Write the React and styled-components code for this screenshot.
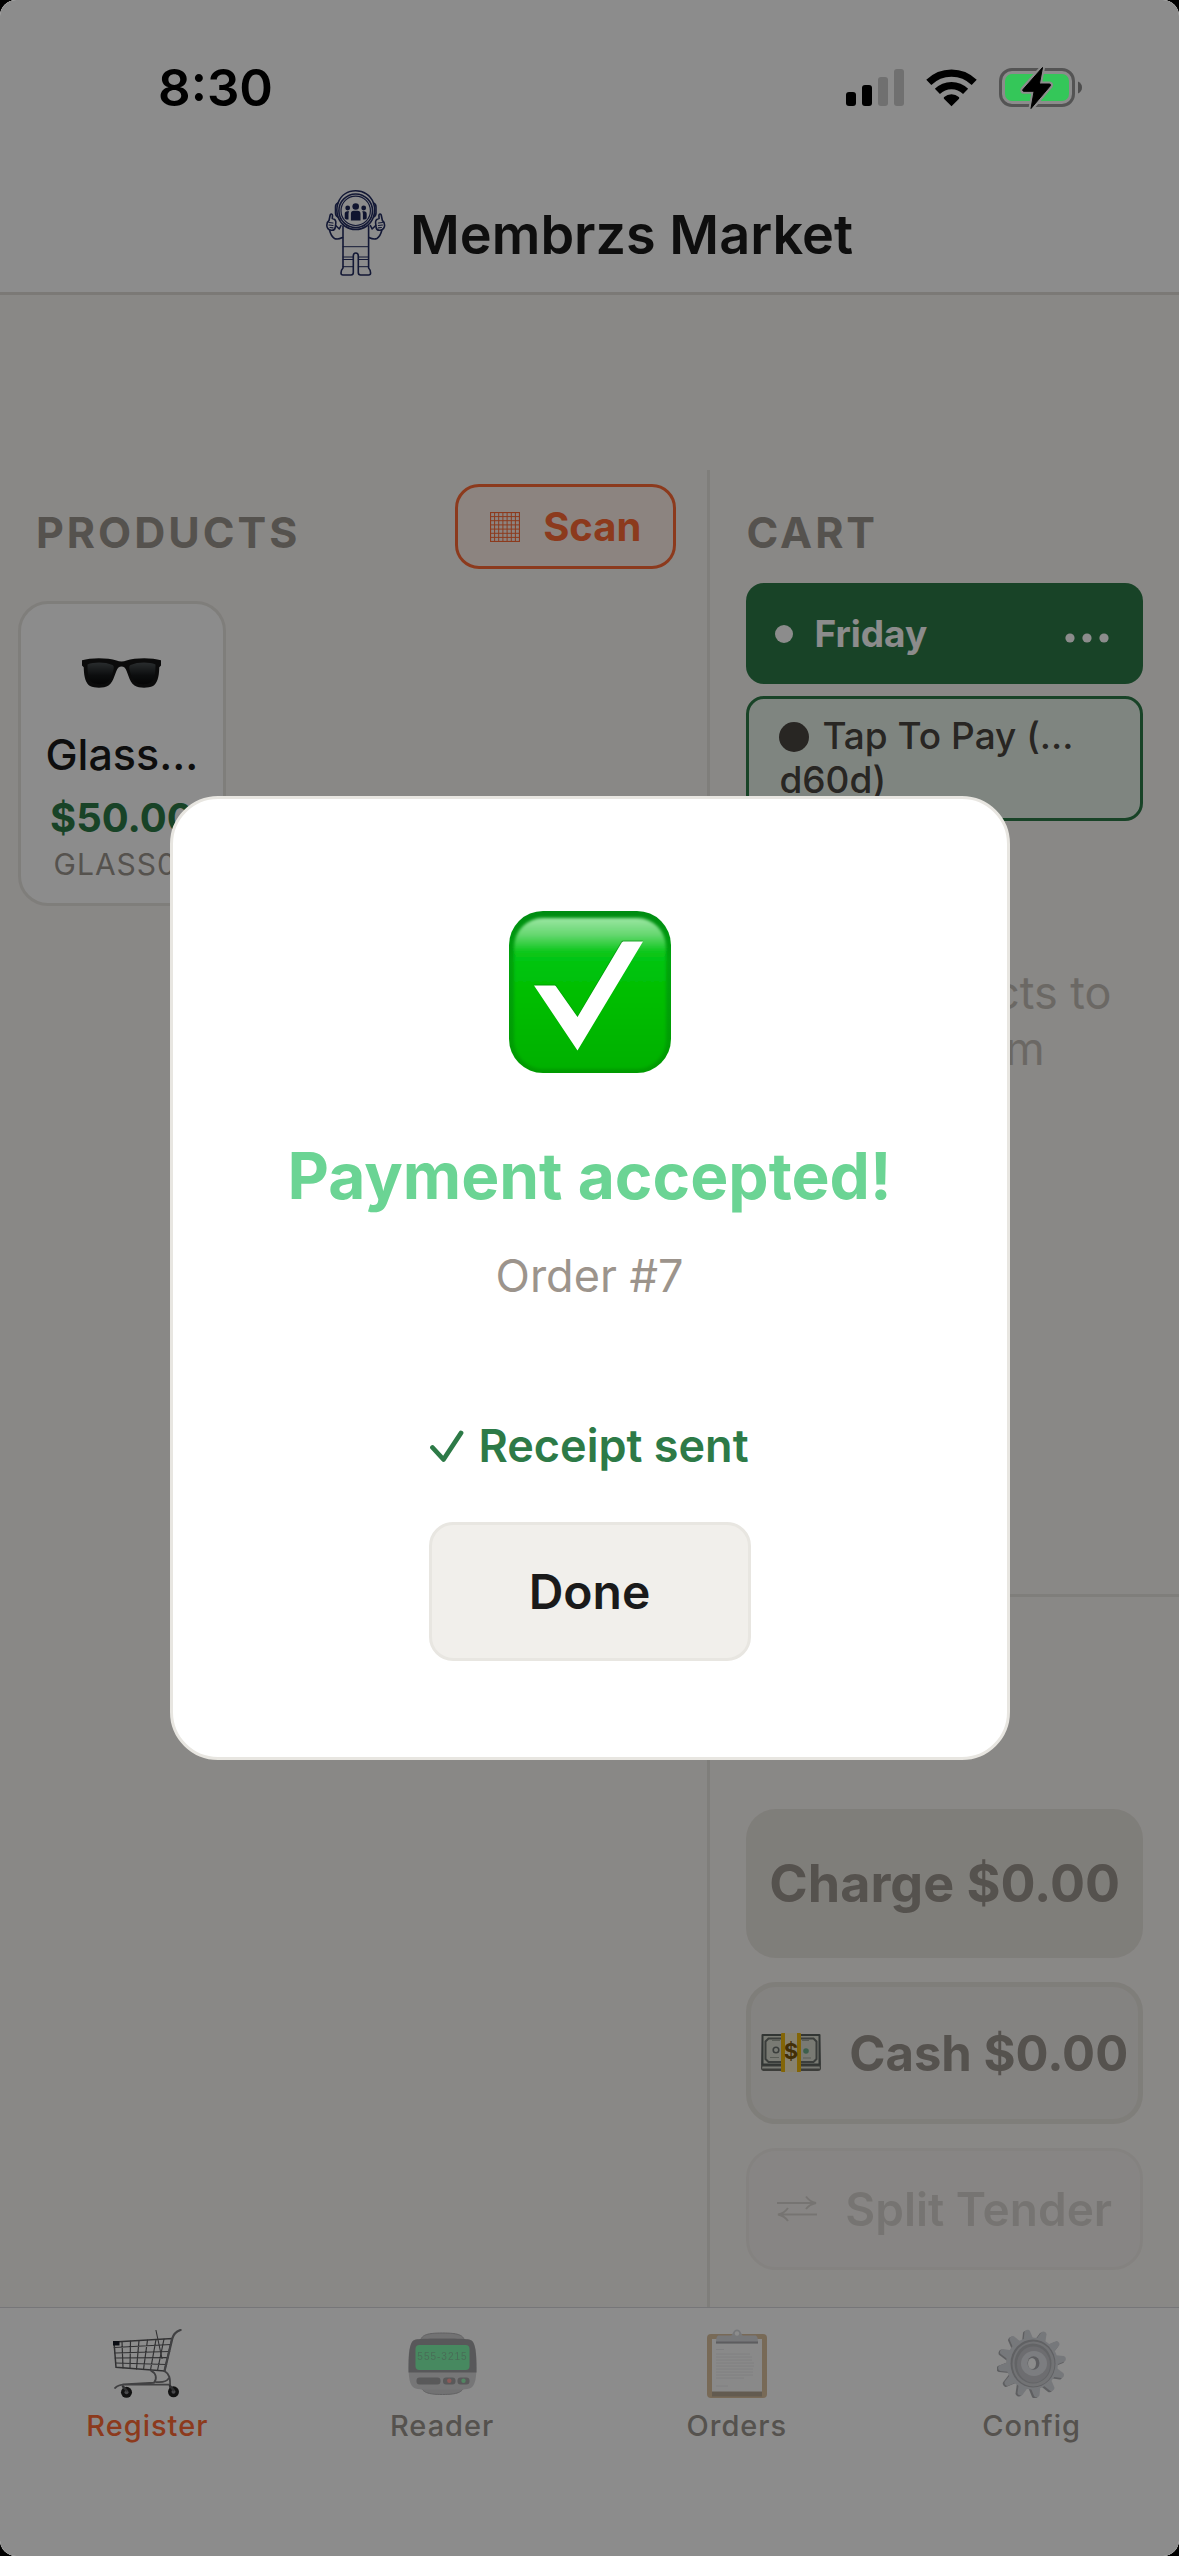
import React, { useState } from "react";
import styled, { createGlobalStyle } from "styled-components";

const GlobalStyle = createGlobalStyle`
  * {
    box-sizing: border-box;
  }
  body {
    margin: 0;
    background: #000;
    font-family: Inter, "Liberation Sans", sans-serif;
  }
  button {
    font-family: inherit;
    margin: 0;
  }
`;

const Screen = styled.div`
  position: relative;
  display: flex;
  flex-direction: column;
  min-height: 100vh;
  overflow: hidden;
  border-radius: 16px;
  background: #faf7f4;
`;

const Header = styled.header`
  background: #fff;
  border-bottom: 3px solid #e0ddd8;
`;

const StatusBar = styled.div`
  position: relative;
  z-index: 2;
  display: flex;
  justify-content: space-between;
  align-items: center;
  height: 122px;
  padding: 54px 97px 0 158px;
`;

const Clock = styled.span`
  font-size: 51px;
  line-height: 68px;
  font-weight: 600;
  color: #000;
`;

const StatusIcons = styled.div`
  display: flex;
  align-items: center;
  gap: 22px;

  svg {
    display: block;
  }
`;

const Brand = styled.div`
  display: flex;
  justify-content: center;
  align-items: flex-end;
  gap: 24px;
  padding: 68px 36px 16px;
`;

const BrandName = styled.h1`
  margin: 0;
  font-size: 54px;
  line-height: 82px;
  font-weight: 600;
  color: #1a1a1a;
`;

const Main = styled.main`
  flex: 1;
  display: grid;
  grid-template-columns: 3fr 2fr;
  padding-top: 175px;
`;

const Products = styled.section`
  min-width: 0;
  padding: 14px 18px 0;
`;

const SectionHead = styled.div`
  display: flex;
  justify-content: space-between;
  align-items: flex-start;
  padding: 0 13px 32px 18px;
`;

const SectionTitle = styled.h2`
  margin: 22px 0 0;
  font-size: 43px;
  line-height: 53px;
  font-weight: 700;
  letter-spacing: 3px;
  color: #9c958e;
`;

const ScanButton = styled.button`
  display: flex;
  align-items: center;
  gap: 23px;
  height: 85px;
  padding: 0 32px;
  border: 3px solid #ff6b35;
  border-radius: 24px;
  background: #fff0ea;
  color: #ff6b35;
  font-size: 40px;
  font-weight: 700;
`;

const ProductGrid = styled.div`
  display: grid;
  grid-template-columns: repeat(3, 1fr);
  gap: 24px;
`;

const ProductCard = styled.button`
  display: flex;
  flex-direction: column;
  align-items: center;
  padding: 29px 12px 21px;
  border: 3px solid #e8e5e0;
  border-radius: 30px;
  background: #fff;
`;

const ProductPicture = styled.span`
  display: flex;
  align-items: center;
  height: 80px;
`;

const ProductName = styled.span`
  margin-top: 15px;
  font-size: 43px;
  line-height: 52px;
  font-weight: 500;
  color: #1a1a1a;
`;

const ProductPrice = styled.span`
  margin-top: 14px;
  font-size: 40px;
  line-height: 48px;
  font-weight: 700;
  color: #2d7a47;
`;

const ProductSku = styled.span`
  margin-top: 4px;
  font-size: 30px;
  line-height: 36px;
  letter-spacing: 1px;
  color: #9c958e;
`;

const Cart = styled.section`
  display: flex;
  flex-direction: column;
  min-width: 0;
  border-left: 3px solid #e8e5e0;
`;

const CartBody = styled.div`
  flex: 1;
  padding: 14px 36px 0;
`;

const EventButton = styled.button`
  display: flex;
  align-items: center;
  width: 100%;
  height: 101px;
  margin-top: 24px;
  padding: 0 34px 0 29px;
  border: 0;
  border-radius: 18px;
  background: #2d7a47;
  color: #fff;
  font-size: 37px;
  font-weight: 700;
  text-align: left;
`;

const EventDot = styled.span`
  width: 18px;
  height: 18px;
  margin-right: 21px;
  border-radius: 50%;
  background: #fff;
`;

const EventName = styled.span`
  flex: 1;
`;

const ReaderButton = styled.button`
  display: block;
  width: 100%;
  margin-top: 12px;
  padding: 15px 30px 16px;
  border: 3px solid #2d7a47;
  border-radius: 18px;
  background: #e8f3ea;
  color: #4a4540;
  font-size: 37px;
  line-height: 44px;
  font-weight: 500;
  text-align: left;
`;

const ReaderDot = styled.span`
  display: inline-block;
  width: 30px;
  height: 30px;
  margin-right: 13px;
  border-radius: 50%;
  background: #4a4540;
  vertical-align: -3px;
`;

const EmptyCart = styled.p`
  margin: 144px 0 0;
  font-size: 45px;
  line-height: 56px;
  text-align: center;
  color: #c4beb7;
`;

const Checkout = styled.div`
  display: flex;
  flex-direction: column;
  gap: 24px;
  padding: 212px 36px 37px;
  border-top: 3px solid #e8e5e0;
`;

const PayButton = styled.button`
  display: flex;
  justify-content: center;
  align-items: center;
  gap: 28px;
  padding: 0;
  border-radius: 30px;
  color: #9c958e;
  font-weight: 600;
  white-space: nowrap;
`;

const ChargeButton = styled(PayButton)`
  height: 149px;
  border: 0;
  background: #e8e5de;
  font-size: 52px;
  font-weight: 700;
`;

const CashButton = styled(PayButton)`
  height: 142px;
  border: 5px solid #e8e5de;
  background: #f1eeeb;
  font-size: 49px;
  font-weight: 700;
`;

const SplitButton = styled(PayButton)`
  height: 122px;
  border: 3px solid #e0dcd6;
  background: #f1eeeb;
  font-size: 46px;
  opacity: 0.35;
`;

const TabBar = styled.nav`
  display: grid;
  grid-template-columns: repeat(4, 1fr);
  padding: 21px 0 112px;
  border-top: 1px solid #d8d8dc;
  background: #fff;
`;

const Tab = styled.a`
  display: flex;
  flex-direction: column;
  align-items: center;
  gap: 10px;
  font-size: 29px;
  line-height: 36px;
  font-weight: 500;
  letter-spacing: 1px;
  text-decoration: none;
  color: ${({ $active }) => ($active ? "#ff6b35" : "#9c958e")};

  svg {
    display: block;
    opacity: ${({ $active }) => ($active ? 1 : 0.5)};
  }
`;

const Backdrop = styled.div`
  position: absolute;
  inset: 0;
  z-index: 1;
  display: flex;
  justify-content: center;
  align-items: center;
  background: rgba(0, 0, 0, 0.45);
`;

const Modal = styled.div`
  display: flex;
  flex-direction: column;
  align-items: center;
  width: 840px;
  max-width: 90%;
  padding: 112px 48px 96px;
  border: 3px solid #e8e6e1;
  border-radius: 48px;
  background: #fff;
`;

const ModalTitle = styled.h2`
  margin: 63px 0 0;
  font-size: 64px;
  line-height: 80px;
  font-weight: 700;
  color: #6bd494;
`;

const OrderNumber = styled.p`
  margin: 32px 0 0;
  font-size: 45px;
  line-height: 56px;
  color: #9c948c;
`;

const Receipt = styled.p`
  display: flex;
  align-items: center;
  gap: 14px;
  margin: 114px 0 0;
  font-size: 45px;
  line-height: 56px;
  font-weight: 600;
  color: #2d7a47;
`;

const DoneButton = styled.button`
  width: 322px;
  height: 139px;
  margin-top: 48px;
  border: 3px solid #e8e6e1;
  border-radius: 24px;
  background: #f1efeb;
  color: #1a1a1a;
  font-size: 48px;
  font-weight: 600;
`;

const SignalIcon = () => (
  <svg width="58" height="38" viewBox="0 0 58 38">
    <rect x="0" y="23" width="10" height="14" rx="3" fill="#000" />
    <rect x="16" y="16" width="10" height="21" rx="3" fill="#000" />
    <rect x="32" y="8" width="10" height="29" rx="3" fill="#000" opacity="0.2" />
    <rect x="48" y="0" width="10" height="37" rx="3" fill="#000" opacity="0.2" />
  </svg>
);

const WifiIcon = () => (
  <svg width="51" height="38" viewBox="0 0 51 38">
    <g fill="none" stroke="#000" strokeWidth="7.2">
      <path d="M2.800 13.400a32.300 32.300 0 0 1 45.400 0" />
      <path d="M11.400 22.400a20 20 0 0 1 28.200 0" />
    </g>
    <path d="M25.500 37.200l-7.300-7.300c-.6-.6-.6-1.400 0-1.900a11 11 0 0 1 14.600 0c.6.5.6 1.300 0 1.900z" fill="#000" />
  </svg>
);

const BatteryIcon = () => (
  <svg width="83" height="42" viewBox="0 0 83 42">
    <rect x="1.5" y="2.5" width="73" height="36" rx="11.5" fill="none" stroke="#000" strokeOpacity="0.4" strokeWidth="3" />
    <path d="M79 14.5c2.600 1 4 3.400 4 6s-1.400 5-4 6z" fill="#000" opacity="0.45" />
    <rect x="6" y="7" width="64" height="27" rx="7" fill="#34c759" />
    <path
      d="M43.5 .5L24 22.500c-.6 1-.2 1.800.9 1.800h10.200L32 41.500 51.300 18.800c.6-1 .2-1.800-.9-1.800H40.400z"
      fill="#000"
      stroke="#8c8c8c"
      strokeWidth="5"
      strokeLinejoin="round"
    />
    <path
      d="M43.5 .5L24 22.500c-.6 1-.2 1.800.9 1.800h10.200L32 41.500 51.300 18.800c.6-1 .2-1.800-.9-1.800H40.400z"
      fill="#000"
      stroke="#000"
      strokeWidth="1"
      strokeLinejoin="round"
    />
  </svg>
);

const AstronautLogo = () => (
  <svg width="60" height="86" viewBox="0 0 60 86" fill="none" stroke="#232d62" strokeWidth="1.6" strokeLinejoin="round" strokeLinecap="round">
    <path d="M12 13C15 5 22 .8 29.700.8S44.500 5 47.500 13c2 .6 2.500 2 2.500 4v6c0 2-.8 3.300-2.500 4C44.500 35 37.500 39.500 29.700 39.500S15 35 12 27c-1.700-.7-2.500-2-2.500-4v-6c0-2 .5-3.400 2.500-4z" />
    <path d="M12 13c-1.500 4.500-1.500 9.500 0 14M47.500 13c1.500 4.500 1.500 9.500 0 14" />
    <circle cx="29.7" cy="20.8" r="16.8" />
    <circle cx="29.7" cy="20.8" r="14.7" strokeWidth="1.2" />
    <g fill="#1c2657" stroke="none">
      <circle cx="29.7" cy="16.5" r="3.3" />
      <circle cx="21.7" cy="18" r="2.4" />
      <circle cx="37.7" cy="18" r="2.4" />
      <path d="M24.900 30.500v-6.500c0-2 1-3.200 3-3.200h3.600c2 0 3 1.200 3 3.200v6.500z" />
      <path d="M18.700 28.500v-4.500c0-1.800 1-2.700 2.500-2.700h2c-.5.800-.7 1.700-.7 2.700v5.500h-2.300z" />
      <path d="M40.700 28.500v-4.500c0-1.800-1-2.700-2.500-2.700h-2c.5.800.7 1.700.7 2.700v5.500h2.300z" />
    </g>
    <path d="M3 30.500l1.200-5.500c.3-1.500 2.300-1.200 2.300.4l-.2 3.100c2.500.5 3.800 2 3.500 4.500l-.5 4.500c-.4 2-2 3-4 2.700-3-.5-4.500-2.300-4.500-5 0-2 .7-3.600 2.200-4.700z" />
    <path d="M3 32.500l4 .5M3 35l4 .5M4 37.500l3 .3" strokeWidth="1.2" />
    <path d="M56.400 30.500l-1.200-5.500c-.3-1.500-2.300-1.200-2.300.4l.2 3.100c-2.500.5-3.800 2-3.500 4.500l.5 4.500c.4 2 2 3 4 2.700 3-.5 4.500-2.300 4.500-5 0-2-.7-3.600-2.200-4.700z" />
    <path d="M56.400 32.500l-4 .5M56.400 35l-4 .5M55.400 37.500l-3 .3" strokeWidth="1.2" />
    <path d="M9.700 35.500l3.600 3.500 1.700-3.500M3.500 40c1 4 2.500 7 5 8.500 2 1 5 .5 8-1M49.700 35.500l-3.600 3.500-1.700-3.500M55.900 40c-1 4-2.500 7-5 8.500-2 1-5 .5-8-1" />
    <path d="M17 36v42c-1.500 1.500-2 3-2 5 0 1.300.8 2 2 2h8c1.400 0 2.300-1 2.300-2.500V66c0-2 .8-3 2.500-3s2.500 1 2.500 3v16.500c0 1.500 1 2.500 2.300 2.500h8c1.200 0 2-.7 2-2 0-2-.5-3.500-2-5V36" />
    <path d="M17 56.700h25.600M17 67h10.300M32.300 67h10.300M17 69.500h10.300M32.300 69.500h10.300M17 76.700h10.300M32.300 76.700h10.300" strokeWidth="1" />
  </svg>
);

const GridIcon = () => (
  <svg width="30" height="30" viewBox="0 0 30 30" fill="none" stroke="currentColor">
    <rect x="0.5" y="0.5" width="29" height="29" strokeWidth="1.2" />
    <path d="M4.600 0v30M8.700 0v30M12.900 0v30M17.100 0v30M21.300 0v30M25.400 0v30M0 4.600h30M0 8.700h30M0 12.900h30M0 17.100h30M0 21.300h30M0 25.400h30" />
  </svg>
);

const SunglassesIcon = () => (
  <svg width="79" height="30" viewBox="0 0 79 30">
    <defs>
      <linearGradient id="lens" x1="0" y1="0" x2="0" y2="1">
        <stop offset="0" stopColor="#4c5254" />
        <stop offset="0.6" stopColor="#16191a" />
        <stop offset="1" stopColor="#0a0a0a" />
      </linearGradient>
    </defs>
    <path d="M0 2.200C9-.6 26-.6 34.500 2.600c3 1.200 7 1.200 10 0C53-.6 70-.6 79 2.200v5.300l-1.700 1.700C77 20 75 25.500 71 28c-5 2.300-14 2.300-18.500-.5C46.500 23.500 46 13 42.500 9.500c-1.600-1.300-4.400-1.300-6 0C33 13 32.500 23.500 26.500 27.500 22 30.300 13 30.300 8 28 4 25.500 2 20 1.700 9.200L0 7.500z" fill="#141414" />
    <path d="M5.500 6.500C12 3.800 23 3.800 30.500 7c2 1 1.300 4 .5 6.500-2 7-4 11.800-10 12.500-13 1-15.500-3.500-15.500-19.500zM73.500 6.500C67 3.800 56 3.800 48.500 7c-2 1-1.300 4-.5 6.500 2 7 4 11.800 10 12.500 13 1 15.500-3.500 15.500-19.500z" fill="url(#lens)" />
  </svg>
);

const MoreIcon = () => (
  <svg width="44" height="18" viewBox="0 0 44 18" fill="currentColor">
    <circle cx="5" cy="13" r="4.6" />
    <circle cx="22" cy="13" r="4.6" />
    <circle cx="39" cy="13" r="4.6" />
  </svg>
);

const CashIcon = () => (
  <svg width="60" height="40" viewBox="0 0 60 40">
    <path d="M1 5h58l1 30c0 2-1 3-3 3H3c-2 0-3-1-3-3z" fill="#6d706b" />
    <path d="M1.500 33.500h57l.5 2H1z" fill="#d8dad0" />
    <rect x="0.5" y="1" width="59" height="31.5" rx="1" fill="#5c6360" />
    <rect x="2.5" y="3" width="55" height="27.5" fill="#dcdfd2" />
    <path d="M7.500 5.500h45l3 3v17.500l-3 3h-45l-3-3V8.500z" fill="none" stroke="#6c726d" strokeWidth="2" />
    <circle cx="15" cy="17" r="2.8" fill="none" stroke="#6c726d" strokeWidth="1.6" />
    <circle cx="45" cy="18" r="2.8" fill="#6fae8b" />
    <path d="M9 24.500h9M42 25h8M11 7.500h8M41 7.500h7" stroke="#a3a89c" />
    <rect x="20" y="0" width="20" height="39" rx="1" fill="#efb90c" />
    <rect x="24" y="0" width="12" height="39" fill="#f7edcb" />
    <text x="30" y="26" textAnchor="middle" fontFamily="Inter, sans-serif" fontSize="22" fontWeight="700" fill="#7b560c">$</text>
  </svg>
);

const SwapIcon = () => (
  <svg width="40" height="28" viewBox="0 0 40 28" fill="none" stroke="currentColor" strokeWidth="2">
    <path d="M0 8h39M29 1.500c2.500 3.500 5.500 5.500 10 6.500-4.500 1-7.500 2.500-10 6M40 19.500H1M11 13c-2.500 3.500-5.500 5.500-10 6.500 4.500 1 7.500 2.800 10 6.500" />
  </svg>
);

const CartIcon = () => (
  <svg width="69" height="69" viewBox="0 0 69 69" fill="none" stroke="#5a5a5d" strokeLinecap="round">
    <path d="M1 13l58-3.500L51.500 42 3 38.300z" strokeWidth="1.5" />
    <path d="M1.200 18.500L58 15.500M1.700 24l55-1.500M2.200 29l53-.3M2.600 34l51 1.500M9 12.500l1 26.300M17.500 12l-.5 27.300M26 11.500L23.500 40M34.500 11l-4 29.500M43 10.500L37.500 41M51 10l-6.500 31.500" strokeWidth="1.2" />
    <path d="M43 1.500l6 28" strokeWidth="1.1" />
    <path d="M67.500 1c-4 1.500-7 4-8.200 8.500L51.500 42" stroke="#77777a" strokeWidth="2.3" />
    <path d="M38 41.600c5 2.500 6.500 8 3 12L10 55.500M51.500 42c5 3 6 7 5.500 17M2 59c3-2.800 5-3.300 9-3.300h46M43 53c6 .4 11 0 12.500-3.500" stroke="#77777a" strokeWidth="1.8" />
    <rect x="0" y="12" width="6.5" height="4.5" fill="#151a25" stroke="none" />
    <circle cx="13.5" cy="63.3" r="5.5" fill="#222" stroke="none" />
    <circle cx="60.5" cy="62.8" r="5.5" fill="#222" stroke="none" />
    <circle cx="13.5" cy="63.3" r="2" fill="#85858a" stroke="none" />
    <circle cx="60.5" cy="62.8" r="2" fill="#85858a" stroke="none" />
    <path d="M10 57.500l3.500 4M57 57l3.500 4" strokeWidth="2.5" />
  </svg>
);

const PagerIcon = () => (
  <svg width="69" height="69" viewBox="0 0 69 69">
    <path d="M13 10c2-4 6-6 21.500-6S54 6 56 10v3H13zM13 58c2 5 6 7.500 21.500 7.500S54 63 56 58v-3H13z" fill="#a0a0a4" stroke="#65656a" />
    <path d="M4 13c2-3 6-3.500 30.500-3.500S63 10 65 13c3 5 3.500 12 3.500 22S68 53 65 57c-3 4-8 3.500-30.500 3.500S7 61 4 57C1 53 .5 45 .5 35S1 18 4 13z" fill="#b1b1b5" />
    <path d="M4 13c2-3 6-3.500 30.500-3.500S63 10 65 13c3 5 3.500 15 3.500 30.500H.5C.5 28 1 18 4 13z" fill="#46464b" />
    <rect x="7.5" y="16" width="54" height="25" rx="4" fill="#08f562" />
    <text x="34.5" y="31" textAnchor="middle" fontFamily="Liberation Sans, sans-serif" fontSize="10" fill="#0c8f42">555-3215</text>
    <rect x="8.5" y="48.5" width="24" height="7" rx="3" fill="#47474b" />
    <rect x="35" y="48.5" width="12.5" height="7" rx="3" fill="#47474b" />
    <rect x="49.5" y="48.5" width="12" height="7" rx="3" fill="#47474b" />
    <circle cx="41.3" cy="51.8" r="2.2" fill="#ff4844" />
    <circle cx="55.5" cy="51.8" r="2.2" fill="#2fe66a" />
  </svg>
);

const ClipboardIcon = () => (
  <svg width="60" height="69" viewBox="0 0 60 69">
    <rect x="0" y="5" width="60" height="64" rx="4" fill="#b98442" />
    <rect x="5" y="62" width="50" height="5.5" fill="#6d4f29" />
    <rect x="5" y="10" width="50" height="52.5" fill="#f7f7f7" />
    <path d="M9 20.500h8M9 25h34M9 28h36M9 31h36M9 34h38M9 37h38M9 40h37M9 43h37M9 46h37M9 49h28M9 57h12" stroke="#d4d4d8" />
    <path d="M12 6.500h12c2 0 1.500-6 6-6s4 6 6 6h12c2 0 3 2 3 8H9c0-6 1-8 3-8z" fill="#b4b6c0" />
    <circle cx="30" cy="4.5" r="2.2" fill="#fff" />
    <path d="M9 13.500h42" stroke="#55565d" strokeWidth="2" />
  </svg>
);

const teeth = [0, 30, 60, 90, 120, 150, 180, 210, 240, 270, 300, 330];

const GearIcon = () => (
  <svg width="69" height="69" viewBox="0 0 69 69">
    <g fill="#5b5d65">
      {teeth.map((angle) => (
        <path key={angle} d="M29 12l2.500-10c.8-2.200 5.200-2.200 6 0L40 12z" transform={`translate(-1 1) rotate(${angle - 8} 34.5 34.5)`} />
      ))}
    </g>
    <g fill="#b3b7c2">
      {teeth.map((angle) => (
        <path key={angle} d="M29.500 12l2.500-10c.8-2.200 4.700-2.200 5.500 0L40 12z" transform={`rotate(${angle - 8} 35 34.5)`} />
      ))}
      <circle cx="35" cy="34.5" r="26" />
    </g>
    <ellipse cx="36" cy="34.5" rx="22.5" ry="24" fill="#62656e" />
    <ellipse cx="36.5" cy="35" rx="21" ry="22.5" fill="#a2a5ae" />
    <ellipse cx="36" cy="34.5" rx="18.5" ry="20" fill="#6d7079" />
    <ellipse cx="36.5" cy="35.5" rx="16.5" ry="18" fill="#8e919b" />
    <ellipse cx="37" cy="34.5" rx="13" ry="12.5" fill="#c6cad4" />
    <ellipse cx="36.5" cy="34" rx="6" ry="6.7" fill="#555861" />
    <ellipse cx="35" cy="34.5" rx="4" ry="5.5" fill="#fff" />
  </svg>
);

const SuccessIcon = () => (
  <svg width="162" height="162" viewBox="0 0 162 162">
    <defs>
      <linearGradient id="badge" x1="0" y1="0" x2="0" y2="1">
        <stop offset="0" stopColor="#008c12" />
        <stop offset="0.3" stopColor="#00a30d" />
        <stop offset="1" stopColor="#009a00" />
      </linearGradient>
      <linearGradient id="badgeFace" x1="0" y1="0" x2="0" y2="1">
        <stop offset="0" stopColor="#9be6a2" />
        <stop offset="0.11" stopColor="#66d770" />
        <stop offset="0.23" stopColor="#07c616" />
        <stop offset="0.5" stopColor="#00be00" />
        <stop offset="1" stopColor="#00b000" />
      </linearGradient>
      <filter id="soft" x="-5%" y="-5%" width="110%" height="110%">
        <feGaussianBlur stdDeviation="1.5" />
      </filter>
    </defs>
    <rect width="162" height="162" rx="34" fill="url(#badge)" />
    <rect x="5" y="7" width="152" height="151" rx="29" fill="url(#badgeFace)" filter="url(#soft)" />
    <path d="M25 73.500h21.500L68.500 105 112 31c.5-1 1.500-1.500 2.500-1.500H134L68.500 138.500z" fill="#007a0a" opacity="0.5" />
    <path d="M25 74.500h20c1 0 1.800.5 2.400 1.400L68.500 106 112.500 32c.5-1 1.500-1.500 2.500-1.500H134L68.500 139.500z" fill="#fff" />
  </svg>
);

const ReceiptCheck = () => (
  <svg width="34" height="34" viewBox="0 0 34 34" fill="none" stroke="currentColor" strokeWidth="4.8" strokeLinecap="round" strokeLinejoin="round">
    <path d="M2.500 18.500L13.500 30.500 31 4" />
  </svg>
);

const tabs = [
  { label: "Register", Icon: CartIcon },
  { label: "Reader", Icon: PagerIcon },
  { label: "Orders", Icon: ClipboardIcon },
  { label: "Config", Icon: GearIcon },
];

const App = () => {
  const [activeTab, setActiveTab] = useState("Register");
  const [open, setOpen] = useState(true);

  return (
    <>
      <GlobalStyle />
      <Screen>
        <Header>
          <StatusBar>
            <Clock>8:30</Clock>
            <StatusIcons>
              <SignalIcon />
              <WifiIcon />
              <BatteryIcon />
            </StatusIcons>
          </StatusBar>
          <Brand>
            <AstronautLogo />
            <BrandName>Membrzs Market</BrandName>
          </Brand>
        </Header>

        <Main>
          <Products>
            <SectionHead>
              <SectionTitle>PRODUCTS</SectionTitle>
              <ScanButton type="button">
                <GridIcon />
                Scan
              </ScanButton>
            </SectionHead>
            <ProductGrid>
              <ProductCard type="button">
                <ProductPicture>
                  <SunglassesIcon />
                </ProductPicture>
                <ProductName>Glass...</ProductName>
                <ProductPrice>$50.00</ProductPrice>
                <ProductSku>GLASS01</ProductSku>
              </ProductCard>
            </ProductGrid>
          </Products>

          <Cart>
            <CartBody>
              <SectionTitle>CART</SectionTitle>
              <EventButton type="button">
                <EventDot />
                <EventName>Friday</EventName>
                <MoreIcon />
              </EventButton>
              <ReaderButton type="button">
                <ReaderDot />
                Tap To Pay (...
                <br />
                d60d)
              </ReaderButton>
              <EmptyCart>
                Tap products to
                <br />
                add them
              </EmptyCart>
            </CartBody>
            <Checkout>
              <ChargeButton type="button" disabled>Charge $0.00</ChargeButton>
              <CashButton type="button" disabled>
                <CashIcon />
                Cash $0.00
              </CashButton>
              <SplitButton type="button" disabled>
                <SwapIcon />
                Split Tender
              </SplitButton>
            </Checkout>
          </Cart>
        </Main>

        <TabBar>
          {tabs.map(({ label, Icon }) => (
            <Tab key={label} href="#" $active={activeTab === label} onClick={() => setActiveTab(label)}>
              <Icon />
              {label}
            </Tab>
          ))}
        </TabBar>

        {open && (
          <Backdrop>
            <Modal role="dialog" aria-modal="true" aria-labelledby="payment-title">
              <SuccessIcon />
              <ModalTitle id="payment-title">Payment accepted!</ModalTitle>
              <OrderNumber>Order #7</OrderNumber>
              <Receipt>
                <ReceiptCheck />
                Receipt sent
              </Receipt>
              <DoneButton type="button" onClick={() => setOpen(false)}>Done</DoneButton>
            </Modal>
          </Backdrop>
        )}
      </Screen>
    </>
  );
};

export default App;
